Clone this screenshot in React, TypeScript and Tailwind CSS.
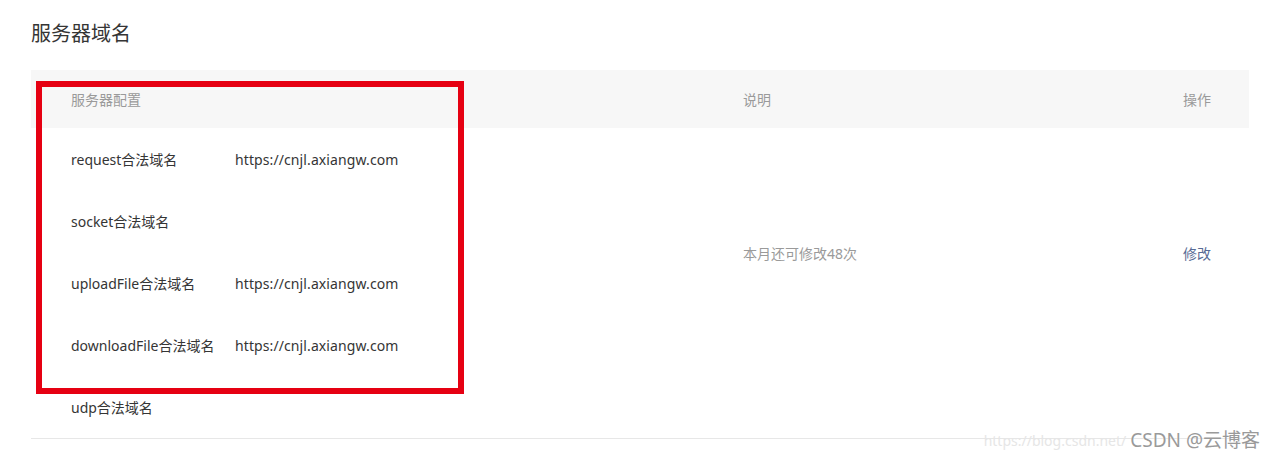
import React from "react";

const rows: { name: string; url?: string }[] = [
  { name: "request合法域名", url: "https://cnjl.axiangw.com" },
  { name: "socket合法域名" },
  { name: "uploadFile合法域名", url: "https://cnjl.axiangw.com" },
  { name: "downloadFile合法域名", url: "https://cnjl.axiangw.com" },
  { name: "udp合法域名" },
];

export default function App() {
  return (
    <div
      className="relative w-[1272px] h-[460px] bg-white overflow-hidden text-[#353535]"
      style={{ fontFamily: '"Segoe UI", "Noto Sans", "Noto Sans CJK SC", sans-serif' }}
    >
      <div className="pl-[31px] pr-[23px] pt-[20px]">
        <h2 className="text-[20px] leading-[28px] font-normal text-[#353535]">服务器域名</h2>
        <div className="mt-[22px] border-b border-[#e7e7e7]">
          <div className="flex h-[58px] items-center bg-[#f7f7f7] text-[14px] text-[#9a9a9a]">
            <div className="w-[712px] pl-[40px]">服务器配置</div>
            <div className="flex-1">说明</div>
            <div className="w-[66px]">操作</div>
          </div>
          <div className="flex">
            <div className="w-[712px] pl-[40px]">
              {rows.map((r) => (
                <div key={r.name} className="flex h-[62px] items-center pt-[1px] text-[14px]">
                  <div className="w-[164px]">{r.name}</div>
                  <div className="tracking-[0.1px]">{r.url}</div>
                </div>
              ))}
            </div>
            <div className="flex-1 flex h-[250px] items-center text-[14px] text-[#9a9a9a]">本月还可修改48次</div>
            <div className="w-[66px] flex h-[250px] items-center text-[14px] text-[#576b95]">修改</div>
          </div>
        </div>
      </div>

      {/* red annotation box */}
      <div className="absolute left-[36px] top-[81px] w-[428px] h-[313px] border-[6px] border-[#e60012]" />

      {/* watermark */}
      <div className="absolute right-[12px] top-[426px] flex items-center gap-[4px]">
        <span className="text-[14px] text-[#e6e6e6]">https://blog.csdn.net/</span>
        <span className="text-[19px] text-[#9a9a9a]" style={{ textShadow: "0 0 2px #fff" }}>CSDN @云博客</span>
      </div>
    </div>
  );
}
